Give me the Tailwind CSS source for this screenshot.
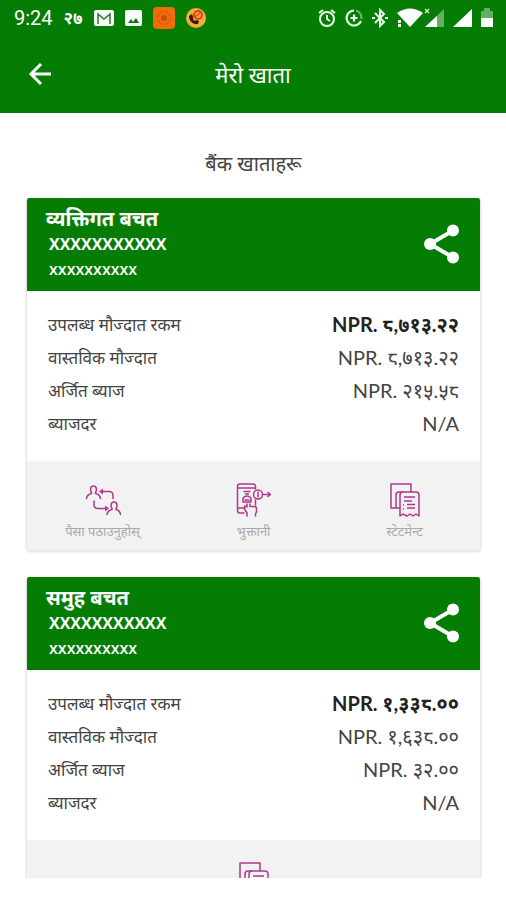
<!DOCTYPE html>
<html lang="ne">
<head>
<meta charset="utf-8">
<meta name="viewport" content="width=device-width, initial-scale=1">
<title>मेरो खाता</title>
<script src="https://cdn.jsdelivr.net/npm/@tailwindcss/browser@4"></script>
</head>
<body class="flex h-screen flex-col overflow-hidden bg-white pb-[22px] font-['Noto_Sans',sans-serif] text-[#444]">

<svg class="hidden" aria-hidden="true">
  <symbol id="share" viewBox="0 0 36 40">
    <path d="M30 6 6 20l24 14" fill="none" stroke="#fff" stroke-width="4"/>
    <circle cx="29" cy="6.500" r="6" fill="#fff"/><circle cx="6" cy="20" r="6" fill="#fff"/><circle cx="29" cy="33.500" r="6" fill="#fff"/>
  </symbol>
  <symbol id="send" viewBox="0 0 36 34">
    <g fill="none" stroke="#b0388f" stroke-width="1.500" stroke-linecap="round" stroke-linejoin="round">
      <path d="M1.500 15.500c.5-3 2-4.500 5-5V9.500C5 7.500 5 3 8.500 3s3.500 4.500 2 6.500v1c3 .5 4.500 2 5 5"/>
      <path d="M22 31.500c.5-3 2-4.500 5-5v-1c-1.500-2-1.500-6.500 2-6.500s3.500 4.500 2 6.500v1c2.500.5 4 2 4.500 5"/>
      <path d="M17 8.500h7q4 0 4 4v3M9 18v3.500q0 4 4 4h7"/>
    </g>
    <path d="M14 8.500l4-3v6zM24 25.500l-4-3v6z" fill="#b0388f"/>
  </symbol>
  <symbol id="pay" viewBox="0 0 36 34">
    <g fill="none" stroke="#b0388f" stroke-width="1.500" stroke-linecap="round" stroke-linejoin="round">
      <path d="M8 30H4q-2.500 0-2.500-2.500V3.500Q1.500 1 4 1h13q2.500 0 2.500 2.500V6M2 5h17.500M2 25h6M19.500 17v5"/>
      <circle cx="22" cy="11.500" r="4.500"/>
      <path d="M22 9v5M27 11.500h7M32 9.500l2.500 2-2.500 2"/>
      <path d="M8 8.500h6M9.500 11h3M7 15q4-4 8 0v4H7zM9 17h4"/>
      <path d="M11 33v-3l-2.500-4v-3l2.500 1v-3M14 21v2.500h4.500q2 0 2 2V29l-1 2v2"/>
    </g>
  </symbol>
  <symbol id="statement" viewBox="0 0 30 34">
    <g fill="none" stroke="#b0388f" stroke-width="1.500" stroke-linejoin="round">
      <path d="M6 25H1V1h20v8"/>
      <path d="M13 9H9q-3 0-3 3v13h4"/>
      <path d="M10 33V12q0-3 3-3h13q3 0 3 3v21l-3-2-3 2-3-2-3 2-4-2z"/>
      <path d="M14 14h11M14 18h8M17 21.500h8M17 25h8M13 22h1M13 26h1"/>
    </g>
  </symbol>
</svg>

<header class="shrink-0 bg-[#057d05] text-white">
  <div class="flex h-9 items-center justify-between pr-[13px] pl-[14px]">
    <div class="flex items-center gap-[11px]">
      <span class="font-[Roboto,sans-serif] text-[20px] leading-6">9:24</span>
      <span class="text-[17px] leading-6 font-bold">२७</span>
      <svg class="h-4 w-5" viewBox="0 0 20 16"><rect width="20" height="16" rx="2" fill="#f4fff4"/><path d="M4 14V4l6 5 6-5v10" fill="none" stroke="#356b35" stroke-width="1.500"/></svg>
      <svg class="h-4 w-[17px]" viewBox="0 0 17 16"><rect width="17" height="16" rx="2" fill="#fff"/><path d="M3 13l3-4 2 3 3-4 3 5z" fill="#057d05"/></svg>
      <svg class="size-[22px]" viewBox="0 0 22 22"><rect width="22" height="22" rx="4" fill="#f26a0a"/><circle cx="11" cy="11" r="6.500" fill="none" stroke="#c9560a" stroke-dasharray="8 2"/><circle cx="11" cy="11" r="3" fill="#c65008"/></svg>
      <svg class="size-5" viewBox="0 0 20 20"><circle cx="10" cy="10" r="10" fill="#f6ad3c"/><circle cx="12" cy="7" r="4" fill="none" stroke="#e3401b" stroke-width="2"/><path d="M9 9l5-4" stroke="#e3401b" stroke-width="1.500"/><path d="M3 8c0 5 4 9 9 8l1-3-3-1-1 1c-2-1-2-2-2-4L6 6z" fill="#3a1608"/></svg>
    </div>
    <div class="flex items-center gap-[9px]">
      <svg class="h-5 w-[18px]" viewBox="0 0 18 20" fill="none" stroke="#e9ffe9" stroke-width="2"><circle cx="9" cy="11" r="7"/><path d="M9 7v4l3 2M1 5l4-3M17 5l-4-3"/></svg>
      <svg class="size-[18px]" viewBox="0 0 18 18" fill="none" stroke="#e9ffe9" stroke-width="2.200"><path d="M9 1.500a7.500 7.500 0 1 0 7 10.500M9 5.500v7M5.500 9h7"/><path d="M11 1.500a8 8 0 0 1 5.500 8.500" stroke="#6fb76f"/></svg>
      <svg class="h-5 w-4" viewBox="0 0 16 20" fill="none" stroke="#e9ffe9" stroke-width="2"><path d="M3 5l9 9-4 4V2l4 4-9 9M0 10h3M13 10h3"/></svg>
      <svg class="h-5 w-[26px]" viewBox="0 0 26 20" fill="#fff"><path d="M0 5q13-9 26 0L13 19z"/><path d="M1 12h3v3H1zM1 16h3v3H1z"/></svg>
      <svg class="-ml-2 h-5 w-5" viewBox="0 0 20 20"><path d="M20 1v18H1z" fill="#64ae64"/><path d="M13 8v11H1z" fill="#fff"/><path d="M1 1l4 4M5 1 1 5" stroke="#d8f2d8" stroke-width="1.300"/></svg>
      <svg class="h-5 w-[19px]" viewBox="0 0 19 20"><path d="M19 1v18H0z" fill="#fff"/></svg>
      <svg class="h-5 w-3" viewBox="0 0 12 20"><path d="M0 3h3V0h6v3h3v7H0z" fill="#64ae64"/><path d="M0 10h12v9H0z" fill="#fff"/></svg>
    </div>
  </div>
  <div class="grid h-[77px] grid-cols-[80px_1fr_80px] items-center pb-[2px]">
    <button type="button" aria-label="Back" class="justify-self-center">
      <svg class="h-6 w-6" viewBox="0 0 24 24" fill="none" stroke="#fff" stroke-width="3"><path d="M23 12H3M13 2 3 12l10 10"/></svg>
    </button>
    <h1 class="text-center text-[22px] leading-7">मेरो खाता</h1>
  </div>
</header>

<main class="min-h-0 flex-1 overflow-hidden pr-[25px] pl-[26px]">
  <h2 class="pt-[37px] pb-[20px] text-center text-[20px] leading-7">बैंक खाताहरू</h2>

  <section class="mb-[26px] overflow-hidden rounded-[3px] border-x border-b border-[#e6e6e9] shadow-sm">
    <div class="flex h-[93px] items-center justify-between bg-[#057d05] pr-5 pl-[19px] pb-[2px] text-white">
      <div>
        <h3 class="text-[20px] leading-6 font-bold">व्यक्तिगत बचत</h3>
        <p class="pl-[3px] font-['Open_Sans',sans-serif] text-[16px] leading-[26px] font-bold">XXXXXXXXXXX</p>
        <p class="pl-[3px] font-['Open_Sans',sans-serif] text-[16px] leading-6 font-semibold">xxxxxxxxxx</p>
      </div>
      <button type="button" aria-label="Share"><svg class="h-10 w-9"><use href="#share"/></svg></button>
    </div>
    <dl class="grid grid-cols-[auto_1fr] gap-x-4 px-[21px] pt-[17px] pb-[21px]">
      <dt class="text-[17px] leading-[33px]">उपलब्ध मौज्दात रकम</dt><dd class="text-right font-[Lato,'Noto_Sans',sans-serif] text-[20px] leading-[33px] font-bold text-[#222]">NPR. ८,७१३.२२</dd>
      <dt class="text-[17px] leading-[33px]">वास्तविक मौज्दात</dt><dd class="text-right font-[Lato,'Noto_Sans',sans-serif] text-[20px] leading-[33px]">NPR. ८,७१३.२२</dd>
      <dt class="text-[17px] leading-[33px]">अर्जित ब्याज</dt><dd class="text-right font-[Lato,'Noto_Sans',sans-serif] text-[20px] leading-[33px]">NPR. २१५.५८</dd>
      <dt class="text-[17px] leading-[33px]">ब्याजदर</dt><dd class="text-right font-[Lato,'Noto_Sans',sans-serif] text-[20px] leading-[33px]">N/A</dd>
    </dl>
    <div class="grid h-[89px] grid-cols-3 bg-[#f2f2f2] pt-[22px] text-[13px] leading-5 text-[#aaa]">
      <button type="button" class="flex flex-col items-center gap-1"><svg class="h-[34px] w-9"><use href="#send"/></svg>पैसा पठाउनुहोस्</button>
      <button type="button" class="flex flex-col items-center gap-1"><svg class="h-[34px] w-9"><use href="#pay"/></svg>भुक्तानी</button>
      <button type="button" class="flex flex-col items-center gap-1"><svg class="h-[34px] w-[30px]"><use href="#statement"/></svg>स्टेटमेन्ट</button>
    </div>
  </section>

  <section class="overflow-hidden rounded-t-[3px] border-x border-[#e6e6e9] shadow-sm">
    <div class="flex h-[93px] items-center justify-between bg-[#057d05] pr-5 pl-[19px] pb-[2px] text-white">
      <div>
        <h3 class="text-[20px] leading-6 font-bold">समुह बचत</h3>
        <p class="pl-[3px] font-['Open_Sans',sans-serif] text-[16px] leading-[26px] font-bold">XXXXXXXXXXX</p>
        <p class="pl-[3px] font-['Open_Sans',sans-serif] text-[16px] leading-6 font-semibold">xxxxxxxxxx</p>
      </div>
      <button type="button" aria-label="Share"><svg class="h-10 w-9"><use href="#share"/></svg></button>
    </div>
    <dl class="grid grid-cols-[auto_1fr] gap-x-4 px-[21px] pt-[17px] pb-[21px]">
      <dt class="text-[17px] leading-[33px]">उपलब्ध मौज्दात रकम</dt><dd class="text-right font-[Lato,'Noto_Sans',sans-serif] text-[20px] leading-[33px] font-bold text-[#222]">NPR. १,३३८.००</dd>
      <dt class="text-[17px] leading-[33px]">वास्तविक मौज्दात</dt><dd class="text-right font-[Lato,'Noto_Sans',sans-serif] text-[20px] leading-[33px]">NPR. १,६३८.००</dd>
      <dt class="text-[17px] leading-[33px]">अर्जित ब्याज</dt><dd class="text-right font-[Lato,'Noto_Sans',sans-serif] text-[20px] leading-[33px]">NPR. ३२.००</dd>
      <dt class="text-[17px] leading-[33px]">ब्याजदर</dt><dd class="text-right font-[Lato,'Noto_Sans',sans-serif] text-[20px] leading-[33px]">N/A</dd>
    </dl>
    <div class="flex h-[89px] items-start justify-center bg-[#f2f2f2] pt-[22px]">
      <button type="button" aria-label="स्टेटमेन्ट"><svg class="h-[34px] w-[30px]"><use href="#statement"/></svg></button>
    </div>
  </section>
</main>
</body>
</html>
